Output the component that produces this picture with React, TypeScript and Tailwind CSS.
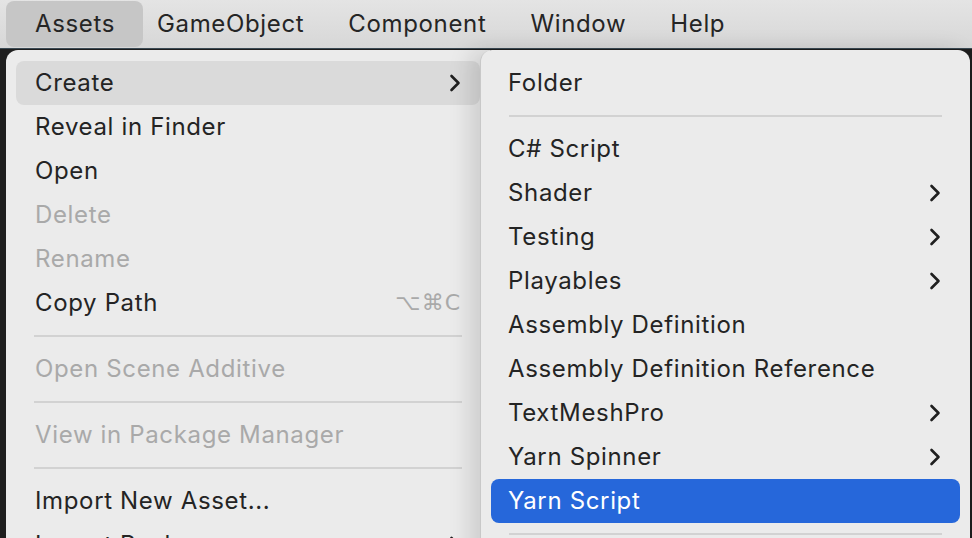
import React from 'react';

type Item =
  | { kind: 'sep' }
  | { kind: 'item'; label: string; sub?: boolean; disabled?: boolean; shortcut?: string; active?: 'hover' | 'selected' };

const assetsMenu: Item[] = [
  { kind: 'item', label: 'Create', sub: true, active: 'hover' },
  { kind: 'item', label: 'Reveal in Finder' },
  { kind: 'item', label: 'Open' },
  { kind: 'item', label: 'Delete', disabled: true },
  { kind: 'item', label: 'Rename', disabled: true },
  { kind: 'item', label: 'Copy Path', shortcut: '⌥⌘C' },
  { kind: 'sep' },
  { kind: 'item', label: 'Open Scene Additive', disabled: true },
  { kind: 'sep' },
  { kind: 'item', label: 'View in Package Manager', disabled: true },
  { kind: 'sep' },
  { kind: 'item', label: 'Import New Asset...' },
  { kind: 'item', label: 'Import Package', sub: true },
];

const createMenu: Item[] = [
  { kind: 'item', label: 'Folder' },
  { kind: 'sep' },
  { kind: 'item', label: 'C# Script' },
  { kind: 'item', label: 'Shader', sub: true },
  { kind: 'item', label: 'Testing', sub: true },
  { kind: 'item', label: 'Playables', sub: true },
  { kind: 'item', label: 'Assembly Definition' },
  { kind: 'item', label: 'Assembly Definition Reference' },
  { kind: 'item', label: 'TextMeshPro', sub: true },
  { kind: 'item', label: 'Yarn Spinner', sub: true },
  { kind: 'item', label: 'Yarn Script', active: 'selected' },
  { kind: 'sep' },
];

function Chevron({ white }: { white?: boolean }) {
  return (
    <svg width="12" height="18" viewBox="0 0 12 18" fill="none">
      <path
        d="M2.5 2 L9.5 9 L2.5 16"
        stroke={white ? '#ffffff' : '#1f1f1f'}
        strokeWidth="2.6"
        strokeLinecap="round"
        strokeLinejoin="round"
      />
    </svg>
  );
}

function MenuList({ items, inset }: { items: Item[]; inset: string }) {
  return (
    <div className="flex flex-col pt-[11px]">
      {items.map((it, i) => {
        if (it.kind === 'sep') {
          return (
            <div key={i} className="h-[22px] flex items-center px-[28px]">
              <div className="h-[2px] w-full bg-[#d2d2d2]" />
            </div>
          );
        }
        const bg =
          it.active === 'hover'
            ? 'bg-[#dadada]'
            : it.active === 'selected'
            ? 'bg-[#2667da]'
            : '';
        const color =
          it.active === 'selected'
            ? 'text-white'
            : it.disabled
            ? 'text-[#a9a9a9]'
            : 'text-[#242424]';
        return (
          <div
            key={i}
            className={`mx-[10px] h-[44px] rounded-[8px] flex items-center justify-between ${inset} pr-[19px] ${bg} ${color}`}
          >
            <span className="text-[24px] leading-none whitespace-nowrap tracking-[0.65px]">{it.label}</span>
            {it.sub && <Chevron white={it.active === 'selected'} />}
            {it.shortcut && (
              <span className="leading-none text-[#a9a9a9] tracking-[1px] font-['DejaVu_Sans',sans-serif] text-[22px]">
                {it.shortcut}
              </span>
            )}
          </div>
        );
      })}
    </div>
  );
}

export default function App() {
  return (
    <div className="w-[972px] h-[538px] overflow-hidden bg-[#1e1e1e] relative font-['Inter','Liberation_Sans',sans-serif]">
      {/* menu bar */}
      <div className="h-[48px] bg-gradient-to-b from-[#e4e4e4] to-[#d7d7d7] flex items-center pl-[6px] text-[24px] text-[#252525] tracking-[0.65px]">
        <div className="h-[46px] mt-[-1px] w-[137px] rounded-[8px] bg-[#c6c6c6] flex items-center pl-[29px]">
          Assets
        </div>
        <div className="flex gap-[44px] ml-[14px]">
          <span>GameObject</span>
          <span>Component</span>
          <span>Window</span>
          <span>Help</span>
        </div>
      </div>
      <div className="h-[1px] bg-[#3b4a54]" />

      {/* menus */}
      <div className="pl-[6px] pt-[1px]">
        <div className="w-[484px] h-[600px] bg-[#ebebeb] rounded-tl-[12px]">
          <MenuList items={assetsMenu} inset="pl-[19px]" />
        </div>
      </div>
      <div className="absolute left-[480px] top-[50px] w-[490px] h-[600px] bg-[#ebebeb] rounded-t-[12px] border-l border-[#c8c8c8] shadow-[-10px_0_22px_rgba(0,0,0,0.13)]">
        <MenuList items={createMenu} inset="pl-[17px]" />
      </div>
    </div>
  );
}
